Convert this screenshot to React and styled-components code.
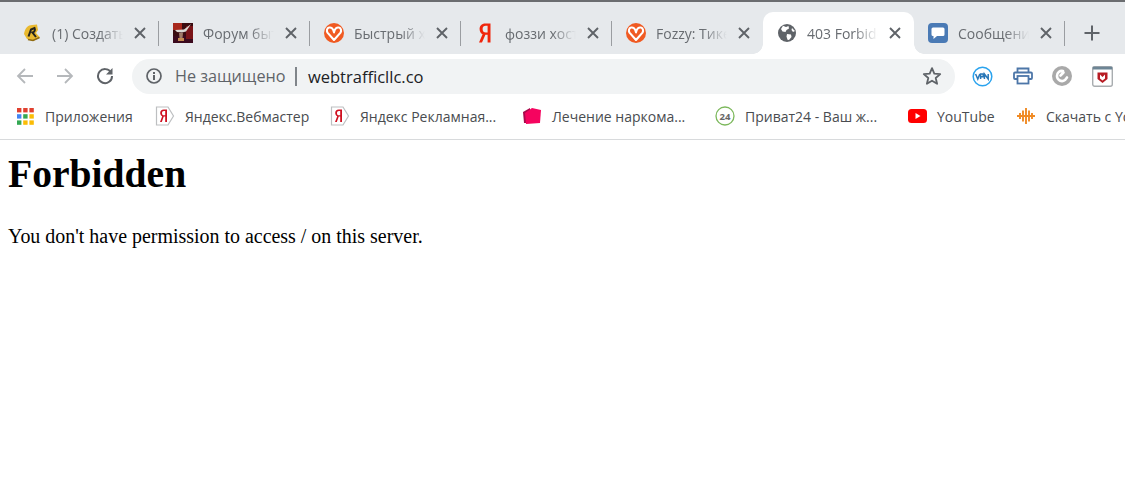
import React from "react";
import styled, { createGlobalStyle } from "styled-components";

const Global = createGlobalStyle`
  html, body { margin: 0; padding: 0; background: #fff; }
  #root { width: 1125px; height: 496px; overflow: hidden; }
`;
const Chrome = styled.div`
  font-family: "Open Sans", "Noto Sans", sans-serif;
  color: #5f6368;
`;
const TabStrip = styled.div`
  height: 52px;
  border-top: 2px solid #6b6d70;
  background: #e6e9ec;
  display: flex;
  align-items: flex-end;
  padding-left: 8px;
`;
const Tab = styled.div`
  position: relative;
  flex: 0 0 151px;
  min-width: 0;
  height: 42px;
  box-sizing: border-box;
  display: flex;
  align-items: center;
  padding: 0 13px 0 14px;
  background: ${p => (p.$active ? "#fff" : "transparent")};
  border-radius: 10px 10px 0 0;
`;
const TabSep = styled.span`
  position: absolute;
  right: 0;
  top: 9px;
  width: 1px;
  height: 25px;
  background: #9a9da1;
`;
const Flare = styled.span`
  position: absolute;
  bottom: 0;
  width: 10px;
  height: 10px;
  ${p => (p.$side === "l" ? "left: -10px;" : "right: -10px;")}
  background: radial-gradient(circle at ${p => (p.$side === "l" ? "0 0" : "100% 0")}, transparent 9.5px, #fff 10px);
`;
const TabTitle = styled.div`
  flex: 1;
  min-width: 0;
  margin: 0 9px 0 10px;
  overflow: hidden;
  white-space: nowrap;
  font-size: 14px;
  color: #686c71;
  -webkit-mask-image: linear-gradient(to right, #000 calc(100% - 26px), transparent calc(100% - 2px));
  mask-image: linear-gradient(to right, #000 calc(100% - 26px), transparent calc(100% - 2px));
`;
const Favicon = styled.span`
  flex: 0 0 20px;
  height: 20px;
  display: flex;
  align-items: center;
  justify-content: center;
`;
const PlusWrap = styled.div`
  height: 42px;
  margin-left: 19px;
  display: flex;
  align-items: center;
`;
const Toolbar = styled.div`
  height: 44px;
  padding: 0 8px 0 16px;
  background: #fff;
  display: flex;
  align-items: center;
`;
const NavIcon = styled.span`
  width: 40px;
  height: 26px;
  display: flex;
  align-items: center;
  flex: 0 0 40px;
`;
const Omnibox = styled.div`
  flex: 0 0 823px;
  margin-left: -4px;
  height: 35px;
  box-sizing: border-box;
  border-radius: 18px;
  background: #f1f3f4;
  display: flex;
  align-items: center;
  padding: 0 13px 0 14px;
`;
const Warn = styled.span`
  font-size: 16.2px;
  color: #5f6368;
  margin-left: 13px;
`;
const Divider = styled.span`
  width: 1.5px;
  height: 19px;
  background: #80858a;
  margin: 0 11px 0 10px;
`;
const Url = styled.span`
  flex: 1;
  font-size: 16.5px;
  color: #202124;
`;
const Exts = styled.div`
  display: flex;
  align-items: center;
  margin-left: 17px;
  gap: 19.7px;
`;
const Bookmarks = styled.div`
  height: 42px;
  box-sizing: border-box;
  padding-bottom: 5px;
  border-bottom: 1px solid #d8dadc;
  background: #fff;
  display: flex;
  align-items: center;
  overflow: hidden;
  white-space: nowrap;
`;
const Bookmark = styled.div`
  display: flex;
  align-items: center;
  flex: 0 0 auto;
  width: ${p => p.$w}px;
  padding-left: ${p => p.$pad || 0}px;
  box-sizing: border-box;
  gap: 10px;
  font-size: 14px;
  color: #494c50;
`;
const BookmarkIcon = styled.span`
  flex: 0 0 20px;
  height: 20px;
  display: flex;
  align-items: center;
  justify-content: center;
`;
const Page = styled.main`
  padding: 0 8px;
  font-family: "Liberation Serif", "Times New Roman", serif;
  color: #000;
`;
const Heading = styled.h1`
  font-size: 39.6px;
  line-height: 46px;
  font-weight: bold;
  margin: 11px 0 0;
`;
const Body = styled.p`
  font-size: 19.95px;
  line-height: 23px;
  margin: 28px 0 0;
`;

const Fozzy = () => (
  <svg width="20" height="20" viewBox="0 0 20 20">
    <circle cx="10" cy="10" r="10" fill="#f05a22" />
    <path d="M10 9.4 C9.4 5.4 7 4 5 4.6 C2.8 5.2 2.4 7.8 3.5 9.6 L10 17 L16.5 9.6 C17.6 7.8 17.2 5.2 15 4.6 C13 4 10.6 5.4 10 9.4 Z" fill="none" stroke="#fff" strokeWidth="2.1" strokeLinejoin="round" />
  </svg>
);
const Ya = () => (
  <svg width="20" height="20" viewBox="0 0 20 20">
    <path d="M15.5 0.5 H10.5 C6.4 0.5 4.6 3 4.6 6 C4.6 8.7 5.8 10.3 7.6 11.3 L4 19.5 H7 L10.4 11.8 H12.6 V19.5 H15.5 Z M12.6 2.8 V9.6 H10.9 C8.8 9.6 7.6 8.3 7.6 6 C7.6 3.8 8.8 2.8 10.8 2.8 Z" fill="#f0260c" />
  </svg>
);
const Close = () => (
  <svg width="12" height="12" viewBox="0 0 12 12" style={{ flex: "0 0 12px" }}>
    <path d="M1 1 L11 11 M11 1 L1 11" stroke="#5f6368" strokeWidth="1.9" />
  </svg>
);
const Fav1 = () => (
  <svg width="18" height="18" viewBox="0 0 18 18">
    <path d="M1 10 C2 4 5 1 9 1 L14 0.5 L15 6 L13 9 L17 13.5 L10 17 L4 15 Z" fill="#e9b92f" />
    <path d="M5.5 12.5 L8 5.5 L11.5 4 C12.5 6 11.5 8 9.5 8.5 L13 13" fill="none" stroke="#24231d" strokeWidth="2" />
    <path d="M5 15.5 L10 16.5 L16.5 13.5" fill="none" stroke="#8f6a12" strokeWidth="1.6" />
  </svg>
);
const Fav2 = () => (
  <svg width="20" height="20" viewBox="0 0 20 20">
    <rect width="20" height="20" fill="#3a0c10" />
    <rect x="0" y="0" width="9" height="7" fill="#a8281c" />
    <rect x="0" y="13" width="20" height="7" fill="#3b0a1e" />
    <rect x="13" y="3" width="7" height="13" fill="#7a1418" />
    <path d="M2 7 L11 6.5 L18 1 L13 8.5 L9 9.5 L4 9 Z" fill="#dcd8d2" />
    <path d="M6 10 H10 L9.5 15 H6.5 Z" fill="#a07a68" />
    <rect x="5" y="15" width="6" height="3" fill="#c48a50" />
  </svg>
);
const Globe = () => (
  <svg width="18" height="18" viewBox="0 0 18 18">
    <circle cx="9" cy="9" r="9" fill="#5f6368" />
    <path d="M5 1.8 L8 3 L10.5 2 L11 4.5 L8.5 6 L7.5 8 L4.5 7.5 L3 5 Z M9 10 L13 10.5 L13.5 13 L11 16 L9.5 15.8 L8.5 12.5 Z M14 4 L17 7 L15 8 L13.5 6 Z" fill="#fff" />
  </svg>
);
const Msg = () => (
  <svg width="20" height="20" viewBox="0 0 20 20">
    <rect width="20" height="20" rx="4" fill="#4a7ab5" />
    <path d="M5 4.5 H15 A1.5 1.5 0 0 1 16.5 6 V11.5 A1.5 1.5 0 0 1 15 13 H9 L5.5 16 V13 H5 A1.5 1.5 0 0 1 3.5 11.5 V6 A1.5 1.5 0 0 1 5 4.5 Z" fill="#fff" />
  </svg>
);
const Plus = () => (
  <svg width="16" height="16" viewBox="0 0 16 16">
    <path d="M8 0.5 V15.5 M0.5 8 H15.5" stroke="#5f6368" strokeWidth="2" />
  </svg>
);
const Back = ({ dir }) => (
  <svg width="18" height="18" viewBox="0 0 18 18" style={dir === "r" ? { transform: "scaleX(-1)" } : undefined}>
    <path d="M17 9 H2 M9 2 L2 9 L9 16" fill="none" stroke="#b5b8bb" strokeWidth="1.8" />
  </svg>
);
const Reload = () => (
  <svg width="18" height="18" viewBox="0 0 18 18">
    <path d="M15 5.5 A7 7 0 1 0 16 9" fill="none" stroke="#5f6368" strokeWidth="2" />
    <path d="M16.5 1 V7.5 H10 Z" fill="#5f6368" />
  </svg>
);
const Info = () => (
  <svg width="16" height="16" viewBox="0 0 16 16" style={{ flex: "0 0 16px" }}>
    <circle cx="8" cy="8" r="7" fill="none" stroke="#5f6368" strokeWidth="1.7" />
    <path d="M7 4 H9 V6 H7 Z M7 7 H9 V12 H7 Z" fill="#5f6368" />
  </svg>
);
const Star = () => (
  <svg width="20" height="20" viewBox="0 0 20 20">
    <path d="M10 2.2 L12.3 7.6 L18.2 8.1 L13.7 12 L15.1 17.8 L10 14.7 L4.9 17.8 L6.3 12 L1.8 8.1 L7.7 7.6 Z" fill="none" stroke="#5f6368" strokeWidth="1.8" strokeLinejoin="round" />
  </svg>
);
const Vpn = () => (
  <svg width="21" height="21" viewBox="0 0 21 21">
    <circle cx="10.5" cy="10.5" r="9.3" fill="#fff" stroke="#2aa3ee" strokeWidth="1.5" />
    <path d="M3.6 8 L5.8 13 L7.8 8 M8.6 13 V8 H11.2 V10.8 H8.6 M12.4 13 V8 L16.2 13 V8" fill="none" stroke="#2a78b8" strokeWidth="1.5" />
  </svg>
);
const Printer = () => (
  <svg width="20" height="18" viewBox="0 0 20 18">
    <path d="M4.5 5 V1.5 H15.5 V5" fill="none" stroke="#4d76a8" strokeWidth="1.8" />
    <rect x="1" y="5.5" width="18" height="6.5" rx="1" fill="#fff" stroke="#4d76a8" strokeWidth="1.8" />
    <rect x="4.5" y="9" width="11" height="7.5" fill="#fff" stroke="#4d76a8" strokeWidth="1.8" />
  </svg>
);
const Link = () => (
  <svg width="20" height="20" viewBox="0 0 20 20">
    <circle cx="10" cy="10" r="10" fill="#a9a9a9" />
    <path d="M11 5 A5 5 0 0 0 5 10 A5 5 0 0 0 13 14 L15 11.5 M11.5 6.5 L8.5 9.5" fill="none" stroke="#fff" strokeWidth="2.6" strokeLinecap="round" />
  </svg>
);
const Mcafee = () => (
  <svg width="21" height="21" viewBox="0 0 21 21">
    <rect x="0.7" y="0.7" width="19.6" height="19.6" rx="2" fill="#fff" stroke="#a9adb0" strokeWidth="1.4" />
    <rect x="0.7" y="0.7" width="19.6" height="2.8" fill="#6d8595" />
    <path d="M5.5 6.5 H15.5 V13 L10.5 17 L5.5 13 Z" fill="#b71c24" />
    <path d="M8 8.5 L10.5 11 L13 8.5 V12.5 L10.5 14.5 L8 12.5 Z" fill="#fff" />
  </svg>
);
const Apps = () => {
  const c = ["#e0402f", "#e0402f", "#e0402f", "#4285f4", "#34a853", "#fbbc05", "#34a853", "#fbbc05", "#fbbc05"];
  return (
    <svg width="17" height="17" viewBox="0 0 17 17">
      {c.map((f, i) => (
        <rect key={i} x={(i % 3) * 6.2} y={Math.floor(i / 3) * 6.2} width="4.4" height="4.4" fill={f} />
      ))}
    </svg>
  );
};
const YaBm = () => (
  <svg width="20" height="20" viewBox="0 0 20 20">
    <path d="M1.5 1 H13 L18.5 10 L13 19 H1.5 Z" fill="#fff" stroke="#bdbfc1" strokeWidth="1.2" />
    <path d="M12 3.5 H8.8 C6.4 3.5 5.2 5 5.2 7 C5.2 8.6 6 9.7 7.2 10.3 L5 16 H6.8 L8.8 10.6 H10.2 V16 H12 Z M10.2 5 V9.3 H9 C7.6 9.3 7 8.4 7 7 C7 5.7 7.6 5 9 5 Z" fill="#cf1020" />
  </svg>
);
const Pink = () => (
  <svg width="20" height="18" viewBox="0 0 20 18">
    <path d="M1 5 L8 1 L8 16 L2 16 Z" fill="#a80a4c" />
    <path d="M3 6 L10 1 L19 3 L18 16 L4 17 Z" fill="#f5045f" />
  </svg>
);
const P24 = () => (
  <svg width="20" height="20" viewBox="0 0 20 20">
    <circle cx="10" cy="10" r="9" fill="#fff" stroke="#7cb85c" strokeWidth="1.3" />
    <text x="10" y="13.5" textAnchor="middle" fontSize="9.5" fontWeight="700" fontFamily="Open Sans" fill="#666">24</text>
  </svg>
);
const Yt = () => (
  <svg width="19" height="14" viewBox="0 0 19 14">
    <rect width="19" height="14" rx="3.5" fill="#f00" />
    <path d="M7.5 4 L12.5 7 L7.5 10 Z" fill="#fff" />
  </svg>
);
const Wave = () => (
  <svg width="20" height="18" viewBox="0 0 20 18">
    <path d="M1 9 H19 M4 6 V12 M7 3.5 V14.5 M10 1 V17 M13 3.5 V14.5 M16 6 V12" stroke="#f08a24" strokeWidth="1.9" fill="none" />
  </svg>
);

const tabs = [
  { icon: <Fav1 />, title: "(1) Создать тему", sep: true },
  { icon: <Fav2 />, title: "Форум бытовой", sep: true },
  { icon: <Fozzy />, title: "Быстрый хостинг", sep: true },
  { icon: <Ya />, title: "фоззи хостинг", sep: true },
  { icon: <Fozzy />, title: "Fozzy: Тикеты", sep: false },
  { icon: <Globe />, title: "403 Forbidden", active: true },
  { icon: <Msg />, title: "Сообщения", sep: true },
];
const marks = [
  { icon: <Apps />, label: "Приложения", w: 155, pad: 15 },
  { icon: <YaBm />, label: "Яндекс.Вебмастер", w: 175 },
  { icon: <YaBm />, label: "Яндекс Рекламная...", w: 192 },
  { icon: <Pink />, label: "Лечение наркома...", w: 193 },
  { icon: <P24 />, label: "Приват24 - Ваш ж...", w: 192 },
  { icon: <Yt />, label: "YouTube", w: 109 },
  { icon: <Wave />, label: "Скачать с YouTube", w: 200 },
];

export default function App() {
  return (
    <>
      <Global />
      <Chrome>
        <TabStrip>
          {tabs.map(t => (
            <Tab key={t.title} $active={t.active}>
              {t.active && <Flare $side="l" />}
              {t.active && <Flare $side="r" />}
              <Favicon>{t.icon}</Favicon>
              <TabTitle>{t.title}</TabTitle>
              <Close />
              {t.sep && <TabSep />}
            </Tab>
          ))}
          <PlusWrap><Plus /></PlusWrap>
        </TabStrip>
        <Toolbar>
          <NavIcon><Back /></NavIcon>
          <NavIcon><Back dir="r" /></NavIcon>
          <NavIcon><Reload /></NavIcon>
          <Omnibox>
            <Info />
            <Warn>Не защищено</Warn>
            <Divider />
            <Url>webtrafficllc.co</Url>
            <Star />
          </Omnibox>
          <Exts>
            <Vpn /><Printer /><Link /><Mcafee />
          </Exts>
        </Toolbar>
        <Bookmarks>
          {marks.map(m => (
            <Bookmark key={m.label} $w={m.w} $pad={m.pad}>
              <BookmarkIcon>{m.icon}</BookmarkIcon>
              <span>{m.label}</span>
            </Bookmark>
          ))}
        </Bookmarks>
      </Chrome>
      <Page>
        <Heading>Forbidden</Heading>
        <Body>You don't have permission to access / on this server.</Body>
      </Page>
    </>
  );
}
